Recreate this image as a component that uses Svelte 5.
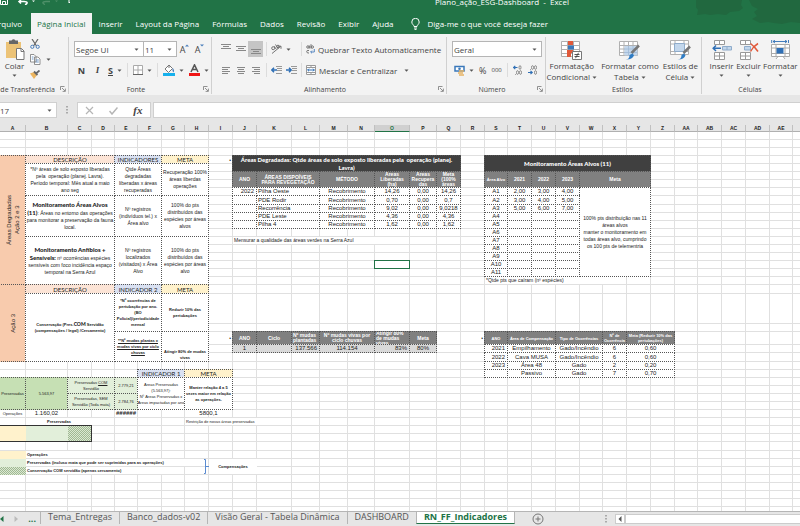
<script>

	const widths = [26,42,24,23,23,24,23,24,24,24,35,28,28,27,35,27,24,24,23,24,24,24,23,24,24,24,23,24,24,24,23];
	const heights = [8,8,8,8,8,8,8,8,9,8,8,8,8,8,8,8,8,8,8,9,30,8,13,8,9,8,8,8,8,8,8,8,8,8,8,9,8,8,8,8,8,8,8];

	const letters = widths.map((w, i) => columnName(i));

	const gridColumns = widths.map(w => w + 'px').join(' ') + ' 1fr';
	const gridRows = '14px ' + heights.map(h => h + 'px').join(' ') + ' minmax(4px, 1fr)';

	let font = $state('Segoe UI');
	let size = $state('11');
	let format = $state('Geral');
	let cellName = $state('17');
	let formula = $state('');
	let activeTab = $state('Página Inicial');
	let activeSheet = $state('RN_FF_Indicadores');

	const tabs = ['Arquivo', 'Página Inicial', 'Inserir', 'Layout da Página', 'Fórmulas', 'Dados', 'Revisão', 'Exibir', 'Ajuda'];
	const sheets = ['Tema_Entregas', 'Banco_dados-v02', 'Visão Geral - Tabela Dinâmica', 'DASHBOARD', 'RN_FF_Indicadores'];

	const degraded = [
		['2022', 'Pilha Oeste', 'Recobrimento', '14,26', '0,00', '14,26'],
		['', 'PDE Rodir', 'Recobrimento', '0,70', '0,00', '0,7'],
		['', 'Recorrência', 'Recobrimento', '9,02', '0,00', '9,0218'],
		['', 'PDE Leste', 'Recobrimento', '4,36', '0,00', '4,36'],
		['', 'Pilha 4', 'Recobrimento', '1,62', '0,00', '1,62']
	];

	const targets = [
		['A1', '2,00', '3,00', '4,00'],
		['A2', '3,00', '4,00', '5,00'],
		['A3', '5,00', '6,00', '7,00'],
		['A4', '', '', ''],
		['A5', '', '', ''],
		['A6', '', '', ''],
		['A7', '', '', ''],
		['A8', '', '', ''],
		['A9', '', '', ''],
		['A10', '', '', ''],
		['A11', '', '', '']
	];

	const occurrences = [
		['2021', 'Empilhamento', 'Gado/Incêndio', '6', '0,60'],
		['2022', 'Cava MUSA', 'Gado/Incêndio', '6', '0,60'],
		['2023', 'Área 48', 'Gado', '2', '0,20'],
		['', 'Passivo', 'Gado', '7', '0,70']
	];

	// first and last column of every field in the tables above
	const degradedCols = ['J:J', 'K:L', 'M:N', 'O:O', 'P:P', 'Q:Q'];
	const targetCols = ['S:S', 'T:T', 'U:U', 'V:V'];
	const occurrenceCols = ['S:S', 'T:U', 'V:W', 'X:X', 'Y:Z'];

	function columnName(i){
		return i < 26 ? String.fromCharCode(65 + i) : 'A' + String.fromCharCode(39 + i);
	}

	function parseRef(ref){
		const [, col, row] = ref.match(/([A-Z]+)(\d+)/);
		return {col: letters.indexOf(col) + 1, row: Number(row) + 1};
	}

	// "B4:D8" -> grid-area, the first grid row holds the column letters
	function area(ref){
		const [a, b = a] = ref.split(':');
		const from = parseRef(a);
		const to = parseRef(b);
		return `${from.row} / ${from.col} / ${to.row + 1} / ${to.col + 1}`;
	}

	function rowArea(cols, row){
		const [a, b] = cols.split(':');
		return area(a + row + ':' + b + row);
	}

</script>

{#snippet arrow()}
	<svg class="arrow" width="5" height="3" viewBox="0 0 5 3"><path d="M0.5 0.5h4L2.5 2.7z" fill="#555"/></svg>
{/snippet}

{#snippet launcher()}
	<svg class="launcher" width="6" height="6" viewBox="0 0 6 6" fill="none" stroke="#777" stroke-width=".8"><path d="M.5 4V.5H4.5M2 2l3 3M5.4 2.6v2.8H2.6"/></svg>
{/snippet}

{#snippet lines(d)}
	<svg width="10" height="10" viewBox="0 0 10 10"><path {d} stroke="#888" stroke-width="1" fill="none"/></svg>
{/snippet}

<main>
	<header>
		<svg class="clouds" width="104" height="26" viewBox="0 0 104 26" fill="#21683f"><path d="M0 0h46l-1 5 2 3-4 3-9 1-4 3-8-1-8 1-5-1-8 1 1-5-3-4zM53 0h51v23l-9-1-9 2-8-1-6-1-8 1-8-4 5-3-3-4 4-3-6-3z"/></svg>
		<div class="titlebar">
			<svg width="70" height="5" viewBox="0 0 70 5" fill="none" stroke="#fff">
				<path d="M.5 0v4.500h7V0M2.500 4V1.500h3V4"/>
				<path d="M19 1.500h5c4 0 4 2 1 3.300M21 0l-2 1.500 2 2" stroke-width="1.500"/>
				<path d="M32 .5h3L33.500 2z" fill="#fff" stroke="none"/>
				<path d="M50 1.500h-4c-4 0-4 2-1 3" stroke="#4f9069" stroke-width="1.300"/>
				<path d="M55 .5h3L56.500 2z" fill="#4f9069" stroke="none"/>
				<path d="M68 1h3M68.500 2.500h2" stroke-width="1"/>
			</svg>
			<span class="title">Plano_ação_ESG-Dashboard &nbsp;-&nbsp; Excel</span>
		</div>
		<nav>
			{#each tabs as tab}
				<button class:active={tab == activeTab} class:file={tab == 'Arquivo'} onclick={() => activeTab = tab}>{tab}</button>
			{/each}
			<button class="tell">
				<svg width="9" height="12" viewBox="0 0 9 12" fill="none" stroke="#fff" stroke-width="1"><path d="M3 8.500C3 6.800.8 6.400.8 4a3.700 3.700 0 0 1 7.400 0C8.200 6.400 6 6.800 6 8.500zM3 10h3M3.500 11.400h2"/></svg>
				Diga-me o que você deseja fazer
			</button>
		</nav>
	</header>

	<div class="ribbon">
		<section class="clipboard">
			<div class="body">
				<button class="big">
					<svg width="20" height="21" viewBox="0 0 20 21"><path d="M1 3h15v16H1z" fill="#ecc377"/><path d="M4 1.500h2.500Q8.500-.8 10.500 1.500H13V5H4z" fill="#666"/><path d="M11.500 9.500h5l2.500 2.500v8.500h-7.500z" fill="#fff" stroke="#777"/><path d="M16 9.500V12.500h3" fill="none" stroke="#777"/></svg>
					<span>Colar</span>
					{@render arrow()}
				</button>
				<div class="stack">
					<button aria-label="Recortar"><svg width="10" height="10" viewBox="0 0 10 10" fill="none"><path d="M2 0l4.500 7M8 0L3.500 7" stroke="#666" stroke-width="1.200"/><circle cx="2.300" cy="7.800" r="1.600" stroke="#4a7ebb"/><circle cx="7.700" cy="7.800" r="1.600" stroke="#4a7ebb"/></svg></button>
					<button aria-label="Copiar"><svg width="11" height="11" viewBox="0 0 11 11" fill="#fff" stroke="#777" stroke-width=".8"><path d="M.5.5H4L6 2.500V8H.5zM4.500 3h3.500l2 2v5.500H4.500z"/><path d="M1.800 3h1.700M1.800 5h1.700M5.800 6h3M5.800 8h3" stroke="#4a7ebb"/></svg>{@render arrow()}</button>
					<button aria-label="Pincel"><svg width="10" height="9" viewBox="0 0 10 9"><path d="M0 3.500L4 2l3 3-3 4z" fill="#ecb55f"/><path d="M4 1.500L7.500 5M6 3.500L9.500.5" stroke="#666" stroke-width="1.800"/></svg></button>
				</div>
			</div>
			<footer><span>Área de Transferência</span>{@render launcher()}</footer>
		</section>

		<section class="font">
			<div class="body rows">
				<div class="tools">
					<label class="combo wide"><select aria-label="Fonte" bind:value={font}><option>Segoe UI</option><option>Arial</option></select>{@render arrow()}</label>
					<label class="combo size"><select aria-label="Tamanho" bind:value={size}><option>11</option><option>12</option></select>{@render arrow()}</label>
					<button class="grow" aria-label="Aumentar fonte"><span>A</span><svg width="4" height="3" viewBox="0 0 4 3"><path d="M0 2.500L2 .5l2 2" fill="#4a7ebb"/></svg></button>
					<button class="grow" aria-label="Diminuir fonte"><span>A</span><svg width="4" height="3" viewBox="0 0 4 3"><path d="M0 .5l2 2 2-2" fill="#4a7ebb"/></svg></button>
				</div>
				<div class="tools text">
					<button><b>N</b></button>
					<button><i>I</i></button>
					<button class="drop"><u>S</u>{@render arrow()}</button>
					<span class="sep"></span>
					<button class="drop" aria-label="Bordas"><svg width="10" height="10" viewBox="0 0 10 10"><path d="M.5.5h9v9h-9zM5 0v9M0 5h10" stroke="#aaa" fill="#fff"/><path d="M0 9.500h10" stroke="#666"/></svg>{@render arrow()}</button>
					<span class="sep"></span>
					<button class="drop" aria-label="Cor de preenchimento"><svg width="12" height="12" viewBox="0 0 12 12"><path d="M6 1L2 5l3.500 3.500L9.500 4.500zM6 1v3" fill="#fff" stroke="#777"/><path d="M9.500 4q2.500 2 1 4.500Q9 7 9.500 4z" fill="#4a7ebb"/><path d="M0 9h12v3H0z" fill="#16b0ec"/></svg>{@render arrow()}</button>
					<button class="drop" aria-label="Cor da fonte"><svg width="11" height="12" viewBox="0 0 11 12"><path d="M2 8L5.500.8 9 8M3.500 5.500h4" stroke="#555" stroke-width="1.500" fill="none"/><path d="M0 9h11v3H0z" fill="#f01414"/></svg>{@render arrow()}</button>
				</div>
			</div>
			<footer><span>Fonte</span>{@render launcher()}</footer>
		</section>

		<section class="align">
			<div class="body rows">
				<div class="tools">
					<button class="sq" aria-label="Em cima">{@render lines('M0 .5h10M2 2.5h6M0 4.5h10')}</button>
					<button class="sq" aria-label="No meio">{@render lines('M0 2.5h10M2 4.5h6M0 6.5h10')}</button>
					<button class="sq on" aria-label="Embaixo">{@render lines('M0 5.5h10M2 7.5h6M0 9.5h10')}</button>
					<span class="sep"></span>
					<button class="pair" aria-label="Orientação"><svg width="11" height="10" viewBox="0 0 11 10" fill="none" stroke="#666" stroke-width=".9"><path d="M1 9.500L9.500 2.500M7 2.200h3v2.600"/><circle cx="2.200" cy="4.200" r="1.500"/><path d="M3.200 2.200l2 3M4.500.5l2.500 4"/><circle cx="7" cy="2.500" r="1.300"/></svg>{@render arrow()}</button>
					<span class="sep"></span>
					<button class="long">
						<svg width="9" height="10" viewBox="0 0 9 10" fill="none" stroke="#666" stroke-width=".9"><circle cx="1.900" cy="3" r="1.200"/><path d="M3.300 1.500v3M5 .2v4.300M3 6.500q-2.500-.5-2.300 1.200T3 9"/><circle cx="6.300" cy="3" r="1.200"/><path d="M8.300 5v3H4.800M6 6.600L4.600 8 6 9.300" stroke="#4a7ebb"/></svg>
						Quebrar Texto Automaticamente
					</button>
				</div>
				<div class="tools">
					<button class="sq" aria-label="Esquerda">{@render lines('M1 2.5h8M1 4.5h6M1 6.5h8M1 8.5h6')}</button>
					<button class="sq" aria-label="Centralizar">{@render lines('M1 2.5h8M2 4.5h6M1 6.5h8M2 8.5h6')}</button>
					<button class="sq" aria-label="Direita">{@render lines('M1 2.5h8M3 4.5h6M1 6.5h8M3 8.5h6')}</button>
					<span class="sep"></span>
					<div class="pair">
						<button aria-label="Diminuir recuo"><svg width="11" height="10" viewBox="0 0 11 10" fill="none"><path d="M5 1.500h6M6 3.500h5M6 5.500h5M5 8.500h6" stroke="#999"/><path d="M6 5H1M3 2.800L.8 5 3 7.200" stroke="#2f6fb5" stroke-width="1.500"/></svg></button>
						<button aria-label="Aumentar recuo"><svg width="11" height="10" viewBox="0 0 11 10" fill="none"><path d="M5 1.500h6M6 3.500h5M6 5.500h5M5 8.500h6" stroke="#999"/><path d="M0 5h5M3 2.800L5.200 5 3 7.200" stroke="#2f6fb5" stroke-width="1.500"/></svg></button>
					</div>
					<span class="sep"></span>
					<button class="long">
						<svg width="10" height="10" viewBox="0 0 10 10" fill="none" stroke="#999"><path d="M.5.5h9v9h-9zM.5 2.500h9M.5 7.500h9M5 0v2.500M5 7.500V10" fill="#fff"/><path d="M1.500 5h7M3 3.700L1.700 5 3 6.300M7 3.700L8.300 5 7 6.300" stroke="#2f6fb5"/></svg>
						Mesclar e Centralizar {@render arrow()}
					</button>
				</div>
			</div>
			<footer><span>Alinhamento</span>{@render launcher()}</footer>
		</section>

		<section class="number">
			<div class="body rows">
				<div class="tools">
					<label class="combo format"><select aria-label="Formato" bind:value={format}><option>Geral</option><option>Moeda</option></select>{@render arrow()}</label>
				</div>
				<div class="tools numeric">
					<button class="drop" aria-label="Moeda"><svg width="11" height="11" viewBox="0 0 11 11"><path d="M1 1.500h9v4.500H1z" fill="#fff" stroke="#3a78ba" stroke-width="1.500"/><circle cx="5.500" cy="3.700" r="1.300" fill="#3a78ba"/><path d="M5 6h5M4 8h5M5 10h5" stroke="#e8b464" stroke-width="1.500"/></svg>{@render arrow()}</button>
					<button class="percent">%</button>
					<button class="thousand">000</button>
					<span class="sep"></span>
					<button class="dec" aria-label="Aumentar casas decimais"><svg width="9" height="10" viewBox="0 0 9 10" fill="none" stroke="#777" stroke-width=".8"><ellipse cx="7" cy="2.500" rx="1" ry="1.900"/><ellipse cx="4.500" cy="7.500" rx="1" ry="1.900"/><ellipse cx="7.500" cy="7.500" rx="1" ry="1.900"/><path d="M2.500 9v.8"/><path d="M4.500 2.500H.8M2.300.8L.6 2.500l1.700 1.700" stroke="#2f6fb5" stroke-width="1.200"/></svg></button>
					<button class="dec" aria-label="Diminuir casas decimais"><svg width="9" height="10" viewBox="0 0 9 10" fill="none" stroke="#777" stroke-width=".8"><ellipse cx="4.500" cy="2.500" rx="1" ry="1.900"/><ellipse cx="7.500" cy="2.500" rx="1" ry="1.900"/><ellipse cx="7.500" cy="7.500" rx="1" ry="1.900"/><path d="M2.500 4v.8"/><path d="M0 7.500h4M2.500 5.800l1.700 1.700-1.700 1.700" stroke="#2f6fb5" stroke-width="1.200"/></svg></button>
				</div>
			</div>
			<footer><span>Número</span>{@render launcher()}</footer>
		</section>

		<section class="styles">
			<div class="body">
				<button class="big">
					<svg width="21" height="20" viewBox="0 0 21 20"><path d="M.5 1.500h18v15H.5zM6.500 1.500v15M12.500 1.500v15M.5 5.500h18M.5 9.500h18M.5 13.500h18" fill="#fff" stroke="#b0b0b0"/><path d="M7 1h5v4H7zM6 10h4v7H6z" fill="#e0593a"/><path d="M7 5.500h6v4H7z" fill="#3a78ba"/><path d="M9 10h3v3H9z" fill="#e0593a"/><path d="M11.500 11.500h9v8h-9z" fill="#fff" stroke="#777"/><path d="M13.500 14.500h5M13.500 16.500h5M17.500 12.800l-3 5.400" stroke="#444" stroke-width=".9"/></svg>
					<span>Formatação<br>Condicional {@render arrow()}</span>
				</button>
				<button class="big">
					<svg width="21" height="20" viewBox="0 0 21 20"><path d="M.5 1.500h18v14H.5zM5 1.500v14M9.500 1.500v14M14 1.500v14M.5 5.500h18M.5 9h18M.5 12.500h18" fill="#fff" stroke="#b0b0b0"/><path d="M5.500 6h13v9.500h-13z" fill="#c3d7ec"/><path d="M9.500 6v9M14 6v9M5 9h13M5 12.500h13" stroke="#9fb9d5" stroke-width=".8"/><path d="M20 5.500L12.500 13" stroke="#777" stroke-width="2.500"/><path d="M6.500 19.500q4 0 4-4.500l3-1.500 1.500 2q-2 4.500-8.500 4z" fill="#2f7cc4"/></svg>
					<span>Formatar como<br>Tabela {@render arrow()}</span>
				</button>
				<button class="big">
					<svg width="21" height="20" viewBox="0 0 21 20"><path d="M.5.5h18v14H.5zM5 .5v14M14 .5v14M.5 4h18M.5 11.500h18" fill="#fff" stroke="#b0b0b0"/><path d="M4.500 3.500h10v8h-10z" fill="#c3d7ec" stroke="#8faccb"/><path d="M20 6.500L13.500 13" stroke="#777" stroke-width="2.500"/><path d="M7.500 19.500q4 0 4-4.500l2.500-1.500 1.500 2q-2 4.500-8 4z" fill="#2f7cc4"/></svg>
					<span>Estilos de<br>Célula {@render arrow()}</span>
				</button>
			</div>
			<footer><span>Estilos</span></footer>
		</section>

		<section class="cells">
			<div class="body">
				<button class="big">
					<svg width="20" height="20" viewBox="0 0 20 20"><path d="M2.500.5h10v4h-10zM7.500.5v4M2.500 12.500h10v7h-10zM7.500 12.500v7M2.500 16h10" fill="#fff" stroke="#999"/><path d="M10.500 6.500h9v3.500h-9zM15 6.500V10" fill="#c3d7ec" stroke="#8faccb"/><path d="M9 8.300H1.500M4 5.500L1.200 8.300 4 11" fill="none" stroke="#2f6fb5" stroke-width="1.500"/></svg>
					<span>Inserir</span>{@render arrow()}
				</button>
				<button class="big">
					<svg width="20" height="20" viewBox="0 0 20 20"><path d="M1.500.5h10v4h-10zM6.500.5v4M1.500 12.500h10v7h-10zM6.500 12.500v7M1.500 16h10" fill="#fff" stroke="#999"/><path d="M5.500 6.500h6v3.500h-6z" fill="#c3d7ec" stroke="#8faccb"/><path d="M11.500 3.500q4 3 7.500 8M19 3.500q-5 3-7.500 8" fill="none" stroke="#e0593a" stroke-width="1.500"/></svg>
					<span>Excluir</span>{@render arrow()}
				</button>
				<button class="big">
					<svg width="19" height="20" viewBox="0 0 19 20"><path d="M.5 4.500h18v12H.5zM5 4.500v12M14 4.500v12M.5 8h18M.5 13.500h18M5 19l2-2.500h5L14 19" fill="#fff" stroke="#aaa"/><path d="M5.500 8h7v5.500h-7z" fill="#2f6fb5"/><path d="M2 1.500h14M4 0L2 1.500 4 3M14 0l2 1.500L14 3M.7 0v3M17.500 0v3" fill="none" stroke="#2f6fb5" stroke-width=".9"/></svg>
					<span>Formatar</span>{@render arrow()}
				</button>
			</div>
			<footer><span>Células</span></footer>
		</section>
	</div>

	<div class="formulabar">
		<label class="namebox"><input type="text" aria-label="Caixa de nome" bind:value={cellName}>{@render arrow()}</label>
		<svg width="2" height="8" viewBox="0 0 2 8" fill="#aaa"><path d="M0 0h2v1.500H0zM0 3h2v1.500H0zM0 6h2v1.500H0z"/></svg>
		<div class="confirm">
			<button aria-label="Cancelar"><svg width="9" height="9" viewBox="0 0 9 9"><path d="M1 1l7 7M8 1L1 8" stroke="#b5b5b5" stroke-width="1.200"/></svg></button>
			<button aria-label="Inserir"><svg width="9" height="9" viewBox="0 0 9 9"><path d="M.5 5l2.500 3L8.500 1.500" stroke="#b5b5b5" stroke-width="1.500" fill="none"/></svg></button>
			<button class="fx">fx</button>
		</div>
		<input class="formula" type="text" aria-label="Fórmula" bind:value={formula}>
	</div>

	<div class="sheet" style:grid-template-columns={gridColumns} style:grid-template-rows={gridRows}>
		<div class="corner"></div>
		{#each letters as letter, i}
			<div class="vline" style:grid-column={i + 1}></div>
			<div class="letter" class:selected={letter == 'O'} style:grid-column={i + 1}>{letter}</div>
		{/each}
		{#each heights as h, i}
			<div class="hline" style:grid-row={i + 2}></div>
		{/each}

		<table>
			<tbody>
				<tr>
					<th class="peach side" rowspan="4" style:grid-area={area('A4:A19')}><span>Áreas Degradadas<br>Ação 2 e 3</span></th>
					<th class="rose head" style:grid-area={area('B4:D4')}>DESCRIÇÃO</th>
					<th class="blue head" style:grid-area={area('E4:F4')}>INDICADORES</th>
					<th class="cream head" style:grid-area={area('G4:H4')}>META</th>
				</tr>
				<tr>
					<td style:grid-area={area('B5:D8')}>*Nº áreas de solo exposto liberadas<br>pela &nbsp;operação (planej. Lavra).<br>Período temporal: Mês atual a maio<br>ano seg</td>
					<td style:grid-area={area('E5:F8')}>Qtde Áreas<br>degradadas<br>liberadas x áreas<br>recuperadas</td>
					<td style:grid-area={area('G5:H8')}>Recuperação 100%<br>áreas liberdas<br>operações</td>
				</tr>
				<tr>
					<td style:grid-area={area('B9:D13')}><span><b>Monitoramento Áreas Alvos</b><br><b>(11)</b>: Áreas no entorno das operações<br>para monitorar a preservação da fauna<br>local.</span></td>
					<td style:grid-area={area('E9:F13')}>Nº registros<br>(indivíduos tel.) x<br>Área alvo</td>
					<td style:grid-area={area('G9:H13')}>100% do pts<br>distribuídos das<br>espécies por áreas<br>alvos</td>
				</tr>
				<tr>
					<td style:grid-area={area('B14:D19')}><span><b>Monitoramento Anfíbios +</b><br><b>Sensíveis:</b> nº ocorrências espécies<br>sensíveis com foco incidência espaço<br>temporal na Serra Azul</span></td>
					<td style:grid-area={area('E14:F19')}>Nº registros<br>localizados<br>(visitados) x Área<br>Alvo</td>
					<td style:grid-area={area('G14:H19')}>100% do pts<br>distribuídos das<br>espécies por áreas<br>alvo</td>
				</tr>
				<tr>
					<th class="peach side" style:grid-area={area('A20:A25')}><span>Ação 3</span></th>
					<th class="rose head" style:grid-area={area('B20:D20')}>DESCRIÇÃO</th>
					<th class="blue head" style:grid-area={area('E20:F20')}>INDICADOR 2</th>
					<th class="cream head" style:grid-area={area('G20:H20')}>META</th>
				</tr>
				<tr>
					<td class="semi" style:grid-area={area('B21:D25')}><span>Conservação (Pres.<b>COM</b> Servidão<br>(compensações / legal) /Cercamento)</span></td>
					<td class="semi" style:grid-area={area('E21:F22')}>*Nº ocorrências de<br>pertubação por ano.<br>(BO<br>Policial)/periodicidade<br>mensal</td>
					<td class="semi" style:grid-area={area('G21:H22')}>Reduzir 10% das<br>pertubações</td>
				</tr>
				<tr>
					<td class="semi" style:grid-area={area('E23:F25')}><u>**Nº mudas plantas x<br>mudas vivas por ciclo<br>chuvas</u></td>
					<td class="semi low" style:grid-area={area('G23:H25')}>Atingir 80% de mudas<br>vivas</td>
				</tr>
			</tbody>
		</table>

		<table>
			<tbody>
				<tr>
					<th class="blue head" style:grid-area={area('F27:G27')}>INDICADOR 1</th>
					<th class="cream head" style:grid-area={area('H27:I27')}>META</th>
				</tr>
				<tr>
					<th class="green tiny" style:grid-area={area('A28:A31')}>Preservadas</th>
					<td class="green tiny" style:grid-area={area('B28:B31')}>5.563,97</td>
					<td class="mint tiny" style:grid-area={area('C28:D29')}><span>Preservadas <u>COM</u><br>Servidão</span></td>
					<td class="mint tiny" style:grid-area={area('E28:E29')}>2.779,21</td>
					<td class="tiny" style:grid-area={area('F28:G31')}>Áreas Preservadas<br>(5.563,97):<br>Nº Áreas Preservadas x<br>Áreas impactadas por ano</td>
					<td class="semi" style:grid-area={area('H28:I31')}>Manter relação 4 a 5<br>vezes maior em relação<br>as operações.</td>
				</tr>
				<tr>
					<td class="mint tiny" style:grid-area={area('C30:D31')}>Preservadas, SEM<br>Servidão (Toda mata)</td>
					<td class="mint tiny" style:grid-area={area('E30:E31')}>2.784,76</td>
				</tr>
				<tr class="plain">
					<td class="tiny" style:grid-area={area('A32')}>Operações</td>
					<td class="val" style:grid-area={area('B32')}>1.160,02</td>
					<td class="val hashes" style:grid-area={area('E32')}>######</td>
					<td class="val" style:grid-area={area('H32:I32')}>5800,1</td>
				</tr>
			</tbody>
		</table>

		<div class="note legend mid" style:grid-area={area('B33:C33')}>Preservadas</div>
		<div class="note small" style:grid-area={area('H33:J33')}>Restrição de novas áreas preservadas</div>

		<div class="swatch cream" style:grid-area={area('A34:A35')}></div>
		<div class="swatch mint" style:grid-area={area('B34:B35')}></div>
		<div class="swatch hatch" style:grid-area={area('C34:C35')}></div>
		<div class="frame" style:grid-area={area('A34:C35')}></div>

		<div class="swatch cream" style:grid-area={area('A37')}></div>
		<div class="note legend" style:grid-area={area('B37:D37')}>Operações</div>
		<div class="swatch mint" style:grid-area={area('A38')}></div>
		<div class="note legend" style:grid-area={area('B38:G38')}>Preservadas (incluso mata que pode ser suprimidas para as operações)</div>
		<div class="swatch hatch" style:grid-area={area('A39')}></div>
		<div class="note legend" style:grid-area={area('B39:F39')}>Conservação COM servidão (apenas cercamento)</div>
		<svg class="brace" style:grid-area={area('H38:H39')} width="5" height="15" viewBox="0 0 5 15" fill="none" stroke="#5b8bd0"><path d="M0 .5h1.500v14H0M1.500 7.500H5"/></svg>
		<div class="note legend mid" style:grid-area={area('I38:J39')}>Compensações</div>

		<div class="mark" style:grid-area={area('I4')}>•</div>
		<table class="report">
			<thead>
				<tr>
					<th class="dark" colspan="6" style:grid-area={area('J4:Q5')}>Áreas Degradadas: Qtde áreas de solo exposto liberadas pela &nbsp;operação (planej.<br>Lavra)</th>
				</tr>
				<tr>
					<th style:grid-area={area('J6:J7')}>ANO</th>
					<th style:grid-area={area('K6:L7')}>ÁREAS DISPOÍVEIS<br>PARA REVEGETAÇÃO</th>
					<th style:grid-area={area('M6:N7')}>MÉTODO</th>
					<th style:grid-area={area('O6:O7')}>Áreas<br>Liberadas<br>(ha)</th>
					<th style:grid-area={area('P6:P7')}>Áreas<br>Recupera<br>das</th>
					<th style:grid-area={area('Q6:Q7')}>Meta<br>(100%<br>áreas</th>
				</tr>
			</thead>
			<tbody>
				{#each degraded as row, r}
					<tr>
						{#each row as value, c}
							<td class="val" class:right={c == 0} class:left={c == 1} style:grid-area={rowArea(degradedCols[c], r + 8)}>{value}</td>
						{/each}
					</tr>
				{/each}
			</tbody>
		</table>
		<div class="note" style:grid-area={area('J14:N14')}>Mensurar a qualidade das áreas verdes na Serra Azul</div>
		<div class="cursor" style:grid-area={area('O17')}></div>

		<table class="report">
			<thead>
				<tr>
					<th class="dark" colspan="5" style:grid-area={area('S4:Y5')}>Monitoramento Áreas Alvos (11)</th>
				</tr>
				<tr>
					<th class="narrow" style:grid-area={area('S6:S7')}>Área Alvo</th>
					<th style:grid-area={area('T6:T7')}>2021</th>
					<th style:grid-area={area('U6:U7')}>2022</th>
					<th style:grid-area={area('V6:V7')}>2023</th>
					<th style:grid-area={area('W6:Y7')}>Meta</th>
				</tr>
			</thead>
			<tbody>
				{#each targets as row, r}
					<tr>
						{#each row as value, c}
							<td class="val" style:grid-area={rowArea(targetCols[c], r + 8)}>{value}</td>
						{/each}
						{#if r == 0}
							<td rowspan="11" style:grid-area={area('W8:Y18')}>100% pts distribuição nas 11<br>áreas alvos<br>manter o monitoramento em<br>todas áreas alvo, cumprindo<br>os 100 pts de telementria</td>
						{/if}
					</tr>
				{/each}
			</tbody>
		</table>
		<div class="note" style:grid-area={area('S19:W19')}>*Qtde pts que caíram (nº espécies)</div>

		<div class="mark" style:grid-area={area('I23')}>•</div>
		<table class="report">
			<thead>
				<tr>
					<th style:grid-area={area('J23')}>ANO</th>
					<th style:grid-area={area('K23')}>Ciclo</th>
					<th class="left" style:grid-area={area('L23')}>Nº mudas<br>plantadas</th>
					<th style:grid-area={area('M23:N23')}>Nº mudas vivas por<br>ciclo chuvas</th>
					<th class="left" style:grid-area={area('O23')}>Atingir 80%<br>de mudas<br>vivas</th>
					<th style:grid-area={area('P23')}>Meta</th>
				</tr>
			</thead>
			<tbody>
				<tr class="shade">
					<td class="val" style:grid-area={area('J24')}>1</td>
					<td class="val" style:grid-area={area('K24')}></td>
					<td class="val right" style:grid-area={area('L24')}>137.566</td>
					<td class="val" style:grid-area={area('M24:N24')}>114.154</td>
					<td class="val right" style:grid-area={area('O24')}>83%</td>
					<td class="val" style:grid-area={area('P24')}>80%</td>
				</tr>
			</tbody>
		</table>

		<div class="mark" style:grid-area={area('R23')}>•</div>
		<table class="report">
			<thead>
				<tr class="little">
					<th style:grid-area={area('S23')}>ANO</th>
					<th style:grid-area={area('T23:U23')}>Área de Compensação</th>
					<th style:grid-area={area('V23:W23')}>Tipo de Ocorrências</th>
					<th style:grid-area={area('X23')}>Nº de<br>Ocorrência</th>
					<th style:grid-area={area('Y23:Z23')}>Meta (Reduzir 10% das<br>pertubações)</th>
				</tr>
			</thead>
			<tbody>
				{#each occurrences as row, r}
					<tr>
						{#each row as value, c}
							<td class="val" class:right={c == 0} style:grid-area={rowArea(occurrenceCols[c], r + 24)}>{value}</td>
						{/each}
					</tr>
				{/each}
			</tbody>
		</table>
	</div>

	<div class="sheetbar">
		<div class="nav">
			<svg width="4" height="6" viewBox="0 0 4 6"><path d="M3.500 0v6L0 3z" fill="#217346"/></svg>
			<svg width="4" height="6" viewBox="0 0 4 6"><path d="M.5 0v6L4 3z" fill="#bbb"/></svg>
			<span>...</span>
		</div>
		{#each sheets as sheet}
			<button class="tab" class:active={sheet == activeSheet} onclick={() => activeSheet = sheet}>{sheet}</button>
		{/each}
		<button class="add" aria-label="Nova planilha"><svg width="12" height="12" viewBox="0 0 12 12" fill="none" stroke="#777"><circle cx="6" cy="6" r="5"/><path d="M3.500 6h5M6 3.500v5"/></svg></button>
		<div class="scroll">
			<svg width="2" height="8" viewBox="0 0 2 8" fill="#aaa"><path d="M0 0h2v1.500H0zM0 3h2v1.500H0zM0 6h2v1.500H0z"/></svg>
			<button aria-label="Rolar para a esquerda"><svg width="4" height="6" viewBox="0 0 4 6"><path d="M3.500 0v6L.5 3z" fill="#555"/></svg></button>
			<div class="track"></div>
		</div>
	</div>
</main>

<style>

	:global(body){
		margin: 0;
	}

	main{
		display: flex;
		flex-direction: column;
		min-height: 100vh;
		overflow: hidden;
		background: #fff;
		color: #444;
		font-family: "Open Sans", "Noto Sans", sans-serif;
		font-size: 8px;
		line-height: 11px;
	}

	button, input, select{
		margin: 0;
		padding: 0;
		border: 0;
		border-radius: 0;
		background: none;
		color: inherit;
		font: inherit;
		box-sizing: border-box;
	}

	button{
		display: flex;
		align-items: center;
		justify-content: center;
		white-space: nowrap;
	}

	svg{
		flex: none;
	}

	header{
		position: relative;
		background: #217346;
		color: #fff;
	}

	.clouds{
		position: absolute;
		top: 0;
		right: 0;
	}

	.titlebar{
		display: flex;
		height: 13px;
		line-height: 3px;
	}

	.title{
		flex: 1;
		padding-left: 134px;
		text-align: center;
	}

	nav{
		position: relative;
		display: flex;
		gap: 1px;
		height: 21px;
	}

	nav button{
		padding: 0 6px;
	}

	nav .file{
		width: 30px;
		justify-content: flex-end;
		padding-right: 8px;
	}

	nav .active{
		background: #f3f3f3;
		color: #217346;
	}

	nav .tell{
		gap: 8px;
		margin-left: 4px;
	}

	.ribbon{
		display: flex;
		height: 61px;
		background: #f3f3f3;
	}

	.ribbon section{
		display: flex;
		flex: none;
		flex-direction: column;
		justify-content: space-between;
		box-sizing: border-box;
		margin: 3px 0 1px;
		border-right: 1px solid #d0d0d0;
		overflow: hidden;
	}

	.clipboard{ width: 69px; }
	.font{ width: 143px; }
	.align{ width: 235px; }
	.number{ width: 99px; }
	.styles{ width: 156px; }
	.ribbon .cells{ flex: 1; border-right: 0; min-width: 98px; }

	section footer{
		display: flex;
		align-items: center;
		height: 10px;
		padding-right: 2px;
		font-size: 7px;
	}

	section footer span{
		flex: 1;
		text-align: center;
		white-space: nowrap;
	}

	.clipboard footer{
		justify-content: flex-end;
		gap: 5px;
	}

	.clipboard footer span{
		flex: none;
	}

	.body{
		display: flex;
	}

	.clipboard .body{
		gap: 3px;
		padding: 2px 0 0 2px;
	}

	.rows{
		flex-direction: column;
		gap: 5px;
		padding: 4px 0 0 5px;
	}

	.tools{
		display: flex;
		align-items: center;
		height: 16px;
	}

	.big{
		flex-direction: column;
		justify-content: flex-start;
		min-width: 25px;
	}

	.big > .arrow{
		margin-top: 3px;
	}

	.big .arrow{
		vertical-align: middle;
	}

	.stack{
		display: flex;
		flex-direction: column;
		gap: 5px;
	}

	.stack button{
		gap: 5px;
		justify-content: flex-start;
	}

	.combo{
		display: flex;
		align-items: center;
		box-sizing: border-box;
		height: 16px;
		padding: 0 4px 0 1px;
		border: 1px solid #b5b5b5;
		background: #fff;
	}

	.combo select{
		flex: 1;
		min-width: 0;
		appearance: none;
	}

	.wide{ width: 70px; }
	.size{ width: 33px; border-left: 0; }
	.format{ width: 90px; }

	.grow{
		align-items: flex-start;
		width: 15px;
		font-size: 9px;
	}

	.text{
		gap: 5px;
		padding-left: 2px;
		font-size: 9px;
	}

	.text button{
		min-width: 11px;
	}

	.text .drop{
		gap: 4px;
	}

	.text i{
		font-family: "Liberation Serif", serif;
		font-weight: bold;
	}

	.text u{
		font-weight: bold;
	}

	.sep{
		flex: none;
		width: 1px;
		height: 14px;
		background: #dcdcdc;
	}

	.sq{
		width: 15px;
		height: 16px;
	}

	.on{
		background: #c5c5c5;
	}

	.align .rows{
		padding-left: 6px;
	}

	.align .sep{
		margin: 0 4px 0 3px;
	}

	.pair{
		display: flex;
		gap: 4px;
		width: 27px;
		justify-content: flex-start;
	}

	.long{
		gap: 3px;
	}

	.long .arrow{
		margin-left: 4px;
	}

	.numeric{
		gap: 5px;
		padding-left: 2px;
	}

	.numeric .drop{
		gap: 4px;
	}

	.percent{
		font-size: 9px;
	}

	.thousand{
		font-size: 6px;
	}

	.numeric .dec + .dec{
		margin-left: 1px;
	}

	.styles .body{
		gap: 4px;
		justify-content: flex-end;
		padding: 3px 3px 0 0;
	}

	.cells .body{
		gap: 2px;
		padding: 3px 0 0 7px;
	}

	.formulabar{
		display: flex;
		align-items: center;
		height: 16px;
		padding-top: 7px;
		background: #e6e6e6;
	}

	.formulabar > svg{
		margin: 0 9px;
	}

	.namebox{
		display: flex;
		align-items: center;
		box-sizing: border-box;
		width: 57px;
		height: 16px;
		padding-right: 4px;
		border: 1px solid #d0d0d0;
		border-left: 0;
		background: #fff;
	}

	.namebox input{
		flex: 1;
		min-width: 0;
	}

	.confirm{
		display: flex;
		justify-content: space-around;
		box-sizing: border-box;
		width: 74px;
		height: 16px;
		margin-right: 2px;
		border: 1px solid #d0d0d0;
		background: #fff;
	}

	.fx{
		font-family: "Liberation Serif", serif;
		font-size: 11px;
		font-style: italic;
		font-weight: bold;
	}

	.formula{
		flex: 1;
		height: 16px;
		border: 1px solid #d0d0d0;
		border-right: 0;
		background: #fff;
	}

	.sheet{
		display: grid;
		flex: 1;
		overflow: hidden;
		color: #222;
		font-family: "Liberation Sans", Arial, sans-serif;
		font-size: 5px;
		line-height: 7px;
	}

	.corner{
		grid-area: 1 / 1 / 2 / -1;
		border-bottom: 1px solid #b0b0b0;
		background: #e6e6e6;
	}

	.vline{
		grid-row: 2 / -1;
		border-right: 1px solid #e0e0e0;
	}

	.hline{
		grid-column: 1 / -1;
		border-bottom: 1px solid #e0e0e0;
	}

	.letter{
		grid-row: 1;
		align-self: end;
		height: 6px;
		border-right: 1px solid #c0c0c0;
		border-bottom: 1px solid #b0b0b0;
		line-height: 6px;
		text-align: center;
		font-weight: bold;
	}

	.letter.selected{
		background: #d0d0d0;
		border-bottom-color: #217346;
		color: #217346;
	}

	table, thead, tbody, tr{
		display: contents;
	}

	th, td{
		display: flex;
		align-items: center;
		justify-content: center;
		margin: -1px 0 0 -1px;
		padding: 0;
		border: 1px dotted #555;
		background-color: #fff;
		overflow: hidden;
		text-align: center;
		white-space: nowrap;
	}

	th{
		font-weight: normal;
	}

	td b{
		font-family: Lato, sans-serif;
		font-size: 6px;
		font-weight: 900;
	}

	.head, .val{
		font-size: 6px;
	}

	.head{
		font-family: "Liberation Sans Narrow", Lato, sans-serif;
	}

	.side span{
		writing-mode: vertical-rl;
		transform: rotate(180deg);
		font-size: 6px;
		line-height: 8px;
	}

	.semi, .tiny{
		font-size: 4px;
		line-height: 6px;
	}

	.semi{
		font-weight: bold;
	}

	.semi b{
		font-size: 5px;
	}

	.low{
		align-items: flex-end;
	}

	.plain td{
		border-color: transparent;
		background-color: transparent;
	}

	.hashes{
		font-weight: bold;
	}

	.left{
		justify-content: flex-start;
		padding-left: 1px;
		text-align: left;
	}

	.right{
		justify-content: flex-end;
		padding-right: 2px;
	}

	.report th{
		background-color: #808080;
		color: #fff;
		font-size: 5px;
		font-weight: bold;
		line-height: 5px;
	}

	.report .dark{
		background-color: #404040;
		font-family: Lato, sans-serif;
		font-size: 6px;
		font-weight: 900;
		line-height: 8px;
	}

	.report .narrow, .report .little th{
		font-size: 4px;
	}

	.shade td{
		background-color: #d9d9d9;
	}

	.peach{ background-color: #f8cbad; }
	.rose{ background-color: #fce4d6; }
	.blue{ background-color: #d9e1f2; }
	.cream{ background-color: #fff2cc; }
	.green{ background-color: #c6e0b4; }
	.mint{ background-color: #e2efda; }

	.hatch{
		background: repeating-conic-gradient(#a0b893 0 25%, #dbe9d2 0 50%) 0 0 / 2px 2px;
	}

	.frame{
		margin: -1px 0 0 -1px;
		border: 1px solid #333;
	}

	.note{
		margin-bottom: 1px;
		padding-left: 1px;
		background: #fff;
		white-space: nowrap;
	}

	.legend{
		font-size: 4px;
		font-weight: bold;
	}

	.mid{
		align-content: center;
		padding: 0;
		text-align: center;
	}

	.small{
		font-size: 4px;
	}

	.brace{
		justify-self: end;
	}

	.mark{
		padding-right: 2px;
		text-align: right;
		align-self: center;
		line-height: 5px;
	}

	.cursor{
		margin: -1px 0 0 -1px;
		border: 1px solid #217346;
	}

	.sheetbar{
		display: flex;
		align-items: flex-start;
		height: 14px;
		border-top: 1px solid #b5b5b5;
		background: #e6e6e6;
		font-size: 9px;
	}

	.nav{
		display: flex;
		align-items: center;
		justify-content: space-between;
		box-sizing: border-box;
		width: 40px;
		height: 13px;
		padding-right: 4px;
		color: #217346;
		font-weight: bold;
	}

	.tab{
		align-items: flex-start;
		height: 12px;
		padding: 0 7px;
		border-left: 1px solid #b5b5b5;
		color: #555;
		line-height: 10px;
	}

	.tab.active{
		border-right: 1px solid #b5b5b5;
		border-bottom: 1px solid #217346;
		background: #fff;
		color: #217346;
		font-weight: bold;
	}

	.add{
		height: 14px;
		margin-left: 17px;
	}

	.scroll{
		display: flex;
		align-items: center;
		width: 195px;
		height: 14px;
		margin-left: auto;
	}

	.scroll button{
		width: 10px;
		height: 10px;
		margin-left: 8px;
		border: 1px solid #ccc;
		background: #fff;
	}

	.track{
		flex: 1;
		height: 10px;
		border: 1px solid #ccc;
		border-right: 0;
		box-sizing: border-box;
		background: #fff;
	}
</style>
